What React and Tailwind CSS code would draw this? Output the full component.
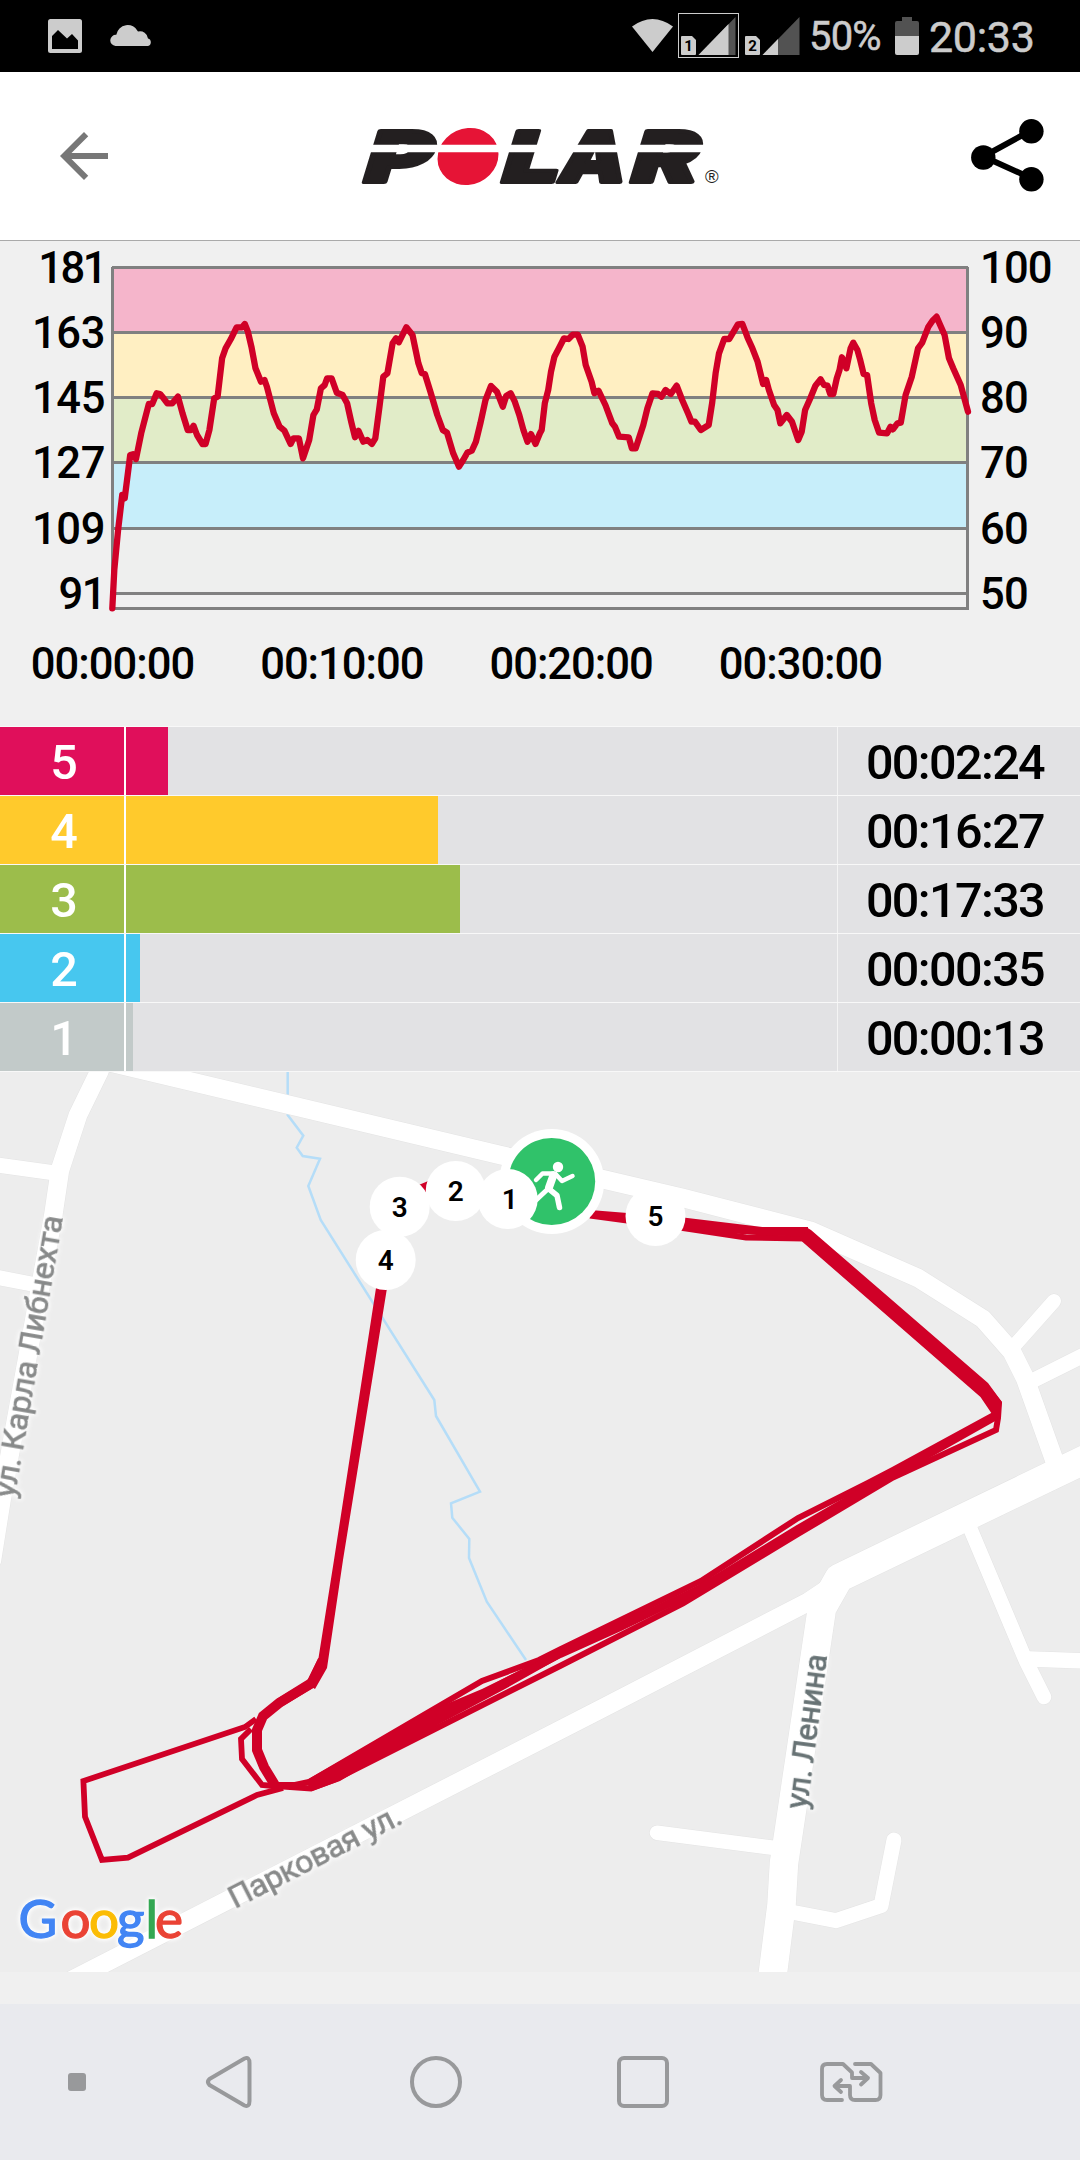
import React from 'react';

const TRACK_RED = '#d00027';

// --- HEART RATE SAMPLES (first half / second half of the session) ---
const firstHalf = [
  [326, 1105], [332, 990], [343, 870], [355, 765], [362, 775], [378, 645], [386, 643], [395, 657], [410, 580], [432, 492],
  [442, 492], [455, 460], [465, 462], [475, 475], [486, 490], [500, 490], [517, 470], [530, 520], [545, 570], [555, 570],
  [562, 557], [572, 585], [588, 612], [597, 612], [608, 570], [622, 475], [632, 470], [645, 355], [655, 325], [670, 298],
  [687, 262], [703, 262], [711, 252], [720, 275], [730, 320], [742, 385], [758, 425], [768, 420], [775, 440], [795, 520],
  [812, 560], [826, 572], [844, 612], [852, 595], [868, 595], [880, 655], [898, 600], [910, 525], [920, 508], [932, 445],
  [943, 435], [950, 415], [963, 415], [978, 458], [995, 465], [1008, 490], [1020, 545], [1031, 592], [1041, 572], [1055, 605],
  [1067, 600], [1080, 612], [1090, 595], [1102, 500], [1113, 410], [1125, 400], [1140, 310], [1150, 295], [1158, 307], [1180, 262],
  [1198, 285], [1215, 370], [1225, 400], [1234, 402], [1250, 455], [1270, 525], [1286, 570], [1298, 578], [1316, 640], [1333, 680],
  [1345, 660], [1357, 638], [1370, 632], [1382, 605], [1395, 550], [1410, 480], [1426, 438], [1443, 455], [1460, 500], [1470, 468],
  [1483, 460], [1495, 485], [1508, 525], [1520, 570], [1532, 605], [1542, 582], [1555, 612], [1568, 580],
];

const secondHalf = [
  [5, 570], [14, 490], [24, 450], [32, 395], [42, 350], [55, 325], [70, 295], [83, 297], [95, 284], [110, 284],
  [124, 320], [133, 375], [150, 425], [158, 460], [170, 452], [190, 495], [210, 550], [218, 560], [230, 590], [258, 592],
  [267, 625], [278, 625], [300, 555], [312, 505], [327, 460], [343, 462], [353, 470], [365, 450], [380, 462], [397, 437],
  [413, 480], [430, 520], [440, 545], [450, 545], [467, 570], [490, 555], [500, 490], [510, 400], [520, 340], [535, 297],
  [550, 297], [575, 253], [588, 252], [603, 293], [617, 325], [632, 365], [648, 432], [657, 420], [665, 450], [680, 495],
  [690, 510], [698, 550], [717, 525], [732, 545], [750, 600], [760, 575], [770, 510], [785, 475], [800, 437], [815, 418],
  [825, 435], [835, 437], [843, 462], [852, 462], [862, 415], [870, 390], [877, 352], [890, 385], [902, 325], [910, 308],
  [922, 330], [930, 360], [940, 402], [950, 405], [962, 490], [972, 540], [985, 578], [1008, 580], [1018, 560], [1025, 568],
  [1038, 550], [1048, 548], [1062, 465], [1080, 410], [1098, 325], [1110, 308], [1128, 260], [1140, 242], [1152, 230], [1160, 250],
  [1175, 285], [1188, 355], [1200, 385], [1222, 435], [1243, 515],
];

const heartRate = [...firstHalf, ...secondHalf.map(([x, y]) => [x + 1568, y])]
  .map(([x, y]) => `${(x / 2.904).toFixed(1)},${(y / 3).toFixed(1)}`)
  .join(' ');

const bands = [
  { y: 27.5, h: 65, color: '#f5b5cb', bpm: 181, pct: 100, tracking: -2.5 },
  { y: 92.5, h: 65, color: '#ffefc2', bpm: 163, pct: 90, tracking: -0.4 },
  { y: 157.5, h: 65, color: '#e1ecc8', bpm: 145, pct: 80, tracking: -0.4 },
  { y: 222.5, h: 66, color: '#c7eefa', bpm: 127, pct: 70, tracking: -0.4 },
  { y: 288.5, h: 65, color: '#eeefee', bpm: 109, pct: 60, tracking: -0.4 },
  { y: 353.5, h: 15, color: '#f0f0f0', bpm: 91, pct: 50, tracking: -1.5 },
];

const zones = [
  { zone: 5, time: '00:02:24', label: 'bg-[#e00f5b]', bar: 'w-[42px] bg-[#e00f5b]' },
  { zone: 4, time: '00:16:27', label: 'bg-[#ffca2c]', bar: 'w-[312px] bg-[#ffca2c]' },
  { zone: 3, time: '00:17:33', label: 'bg-[#9cbd4b]', bar: 'w-[334px] bg-[#9cbd4b]' },
  { zone: 2, time: '00:00:35', label: 'bg-[#47c7ef]', bar: 'w-[14px] bg-[#47c7ef]' },
  { zone: 1, time: '00:00:13', label: 'bg-[#c2cac9]', bar: 'w-[7px] bg-[#c2cac9]' },
];

const roads = [
  { d: 'M100 1060L286.7 1104.3L500 1155L683 1198L811 1231L918 1278L983 1319L1012 1352L1025 1378L1056 1465', w: 18.5 },
  { d: 'M1014 1346L1054 1301', w: 14 },
  { d: 'M1030 1382L1090 1352', w: 15 },
  { d: 'M102 1064L99 1072L78 1115L60 1170L53 1217L2 1497L-8 1560', w: 18.5 },
  { d: 'M-10 1164L55 1173', w: 15 },
  { d: 'M-10 1276L42 1286', w: 15 },
  { d: 'M70 1981L600 1709.5L808 1602L832 1586', w: 18.5 },
  { d: 'M1090 1457L839 1578L822 1608L789 1830L784 1863L781.5 1905L772 1980', w: 28.5 },
  { d: 'M970 1528L1026 1661L1044 1697', w: 14.5 },
  { d: 'M1030 1659L1090 1661', w: 15.5 },
  { d: 'M657 1832.7L775 1848', w: 14.5 },
  { d: 'M786 1911L836 1920.7L881 1905.7L894 1840', w: 15 },
];

const route = [
  { d: 'M590 1213L683 1220.500L762 1230L808 1230', w: 6 },
  { d: 'M590 1215.500L683 1228L746 1237.5L804 1238.5', w: 6 },
  { d: 'M590 1214.5L683 1224L730 1230L770 1232.5L806 1233', w: 6.5 },
  { d: 'M985 1386L999 1403L998 1418L996 1430L893 1477.5L798 1534L683 1603.5L560 1666L336 1779L311 1788.5L283 1786.5', w: 6 },
  { d: 'M994 1415L893 1470L868 1483L798 1518L701 1581L560 1649.5L539 1660L482 1681L309 1782L295 1785L270 1785', w: 6 },
  { d: 'M996 1416L893 1474L798 1529L701 1588L620 1627L560 1654L500 1685L383 1747.5L325 1781', w: 8 },
  { d: 'M322.5 1660L311 1684L279 1703', w: 9.5 },
  { d: 'M313 1682L279 1703L263 1716L257 1730L257 1750L264 1767L275.5 1786', w: 10 },
  { d: 'M421 1189L445 1179', w: 9 },
  { d: 'M283 1788L257 1795L128 1857.7L102 1860L85 1816.7L83.4 1781L245 1727L256 1719', w: 5.8 },
  { d: 'M251 1729L241 1739L242 1759L262 1785L283 1787', w: 5.8 },
];

// overlapping laps that merge into one solid area
const merged = [
  'M806 1227L811 1230L988 1383L1001.500 1401.500L1000 1420L992 1414L980.500 1397L802 1241.500z',
  'M376 1288L387 1288L343 1560L327 1668L315 1689L306 1683L318.500 1658L334 1560z',
  'M305 1781L425 1713L482 1689L560 1651L560 1658L505 1689L404 1743L340 1781L312 1791z',
];

const markers = [
  { n: 3, x: 399.7, y: 1206.7 },
  { n: 2, x: 455.7, y: 1191 },
  { n: 1, x: 507.7, y: 1199 },
  { n: 4, x: 385.7, y: 1260 },
  { n: 5, x: 655.5, y: 1216 },
];

const SimSignal = ({ slot, strong }) => (
  <svg width="55" height="38" viewBox="0 0 55 38">
    <path d="M1 19h10l4 4v14a1 1 0 0 1-1 1H1a1 1 0 0 1-1-1V20a1 1 0 0 1 1-1z" fill="#ccc" />
    <text x="7.5" y="34" textAnchor="middle" fontSize="15" fontWeight="700" fill="#000">{slot}</text>
    <path d="M54.500 0V38H17.500z" fill="#525252" />
    <path d={strong ? 'M47.500 7V38H17.500z' : 'M33 22V38H17.500z'} fill="#ccc" />
  </svg>
);

const StatusBar = () => (
  <div className="h-[72px] bg-black flex items-start text-[#ccc]">
    <svg className="ml-12 mt-[19px]" width="34" height="34" viewBox="0 0 34 34">
      <rect width="34" height="34" rx="2.500" fill="#ccc" />
      <path d="M4 30V17L10 11L19 19.500L24 15L30 21.500V30z" fill="#000" />
    </svg>
    <svg className="ml-7 mt-[23px]" width="42" height="23" viewBox="0 0 42 23">
      <path d="M5.500 23a5.500 5.500 0 0 1 .8-11.200A11.500 11.500 0 0 1 28 8.500A8 8 0 0 1 38 15.500A3.900 3.900 0 0 1 38 23z" fill="#ccc" />
    </svg>
    <svg className="ml-[480px] mt-[19px]" width="41" height="33" viewBox="0 0 41 33">
      <path d="M0 7.500Q20.500-7.500 41 7.500L20.500 33z" fill="#ccc" />
    </svg>
    <div className="ml-[5px] mt-[13px] w-[61px] h-[45px] border border-[#ccc] pl-0.5 pt-[3px]">
      <SimSignal slot="1" strong />
    </div>
    <div className="ml-[6px] mt-[17px]"><SimSignal slot="2" /></div>
    <span className="ml-[9px] mt-[17px] w-[75px] text-[40px] leading-[40px] tracking-[-0.8px] [-webkit-text-stroke:0.5px_#ccc]">50%</span>
    <svg className="ml-[11px] mt-[17px]" width="24" height="38" viewBox="0 0 24 38">
      <path d="M7 0h10v4h5a2 2 0 0 1 2 2v14H0V6a2 2 0 0 1 2-2h5z" fill="#525252" />
      <path d="M0 19h24v17a2 2 0 0 1-2 2H2a2 2 0 0 1-2-2z" fill="#ccc" />
    </svg>
    <span className="ml-[10px] mt-[16px] text-[43px] leading-[42px] tracking-[-0.3px] [-webkit-text-stroke:0.5px_#ccc]">20:33</span>
  </div>
);

const PolarLogo = () => (
  <svg width="380" height="120" viewBox="-10 -28 380 120">
    <g fill="#231f20" stroke="#231f20" strokeWidth="4" strokeLinejoin="round" fontFamily="Inter" fontWeight="900" fontSize="70">
      <text transform="translate(0 57.500) skewX(-17)" textLength="66" lengthAdjust="spacingAndGlyphs">P</text>
      <text transform="translate(138 57.500) skewX(-17)" textLength="57" lengthAdjust="spacingAndGlyphs">L</text>
      <text transform="translate(196 57.500) skewX(-12)" textLength="66" lengthAdjust="spacingAndGlyphs">A</text>
      <text transform="translate(267 57.500) skewX(-17)" textLength="66" lengthAdjust="spacingAndGlyphs">R</text>
    </g>
    <ellipse cx="108" cy="32.500" rx="31" ry="28" transform="rotate(-25 108 32.500)" fill="#e61436" />
    <path d="M0 24.500H344" stroke="#fff" strokeWidth="7.400" />
    <text x="345" y="58.500" fontSize="18.500" fontFamily="Liberation Sans" fill="#231f20">®</text>
  </svg>
);

const Header = () => (
  <div className="h-[169px] bg-white border-b border-[#aaa] flex items-center">
    <svg className="ml-12" width="72" height="72" viewBox="0 0 24 24" fill="#777">
      <path d="M20 11H7.830l5.590-5.590L12 4l-8 8 8 8 1.410-1.410L7.830 13H20v-2z" />
    </svg>
    <div className="ml-[230px]"><PolarLogo /></div>
    <svg className="ml-[240px]" width="76" height="76" viewBox="0 0 76 76">
      <path d="M61.400 13.300L13.300 39.500L61.400 61.300" transform="translate(0 -1)" fill="none" stroke="#000" strokeWidth="6" />
      <circle cx="61.400" cy="13.300" r="12.200" />
      <circle cx="13.300" cy="39.500" r="12.200" />
      <circle cx="61.400" cy="61.300" r="12.200" />
    </svg>
  </div>
);

const HeartRateChart = () => (
  <svg className="block" width="1080" height="485" viewBox="0 1 1080 485" fontSize="43.500" fontWeight="500">
    {bands.map((b) => (
      <g key={b.bpm}>
        <rect x="112.500" y={b.y} width="855" height={b.h} fill={b.color} />
        <text x="105" y={b.y + 15.5} textAnchor="end" letterSpacing={b.tracking}>{b.bpm}</text>
        <text x="980" y={b.y + 15.5} letterSpacing="-0.8">{b.pct}</text>
      </g>
    ))}
    {bands.map((b) => (
      <path key={b.bpm} d={`M112 ${b.y}H968`} stroke="#808080" strokeWidth="3" />
    ))}
    <path d="M112.500 27V368.500H967.500V27" fill="none" stroke="#808080" strokeWidth="3" />
    <polyline points={heartRate} fill="none" stroke={TRACK_RED} strokeWidth="6.300" strokeLinejoin="round" strokeLinecap="round" />
    {['00:00:00', '00:10:00', '00:20:00', '00:30:00'].map((t, i) => (
      <text key={t} x={112.5 + i * 229.3} y="439" textAnchor="middle" letterSpacing="-1">{t}</text>
    ))}
  </svg>
);

const ZoneTable = () => (
  <div className="border-t border-[#f8f8f8]">
    {zones.map((z) => (
      <div key={z.zone} className="h-[69px] flex border-b border-[#f8f8f8] bg-[#e2e2e4] text-[48.5px] leading-[72px] font-medium">
        <div className={`w-[124px] pl-1 text-center text-white ${z.label}`}>{z.zone}</div>
        <div className="w-[713px] border-l-2 border-white">
          <div className={`h-full ${z.bar}`} />
        </div>
        <div className="flex-1 border-l border-[#f4f4f4] pr-2 text-center tracking-[-1.6px]">{z.time}</div>
      </div>
    ))}
  </div>
);

const StreetName = ({ x, y, angle, length, color, children }) => (
  <text
    className="[filter:drop-shadow(0_0_2px_#fff)_drop-shadow(0_0_2px_#fff)]"
    transform={`translate(${x} ${y}) rotate(${angle})`}
    textLength={length}
    fontSize="32"
    fill={color}
    stroke={color}
    strokeWidth="0.700"
  >
    {children}
  </text>
);

const RouteMap = () => (
  <svg className="block" width="1080" height="900" viewBox="0 1072 1080 900">
    <rect y="1072" width="1080" height="900" fill="#ededed" />
    <path
      d="M287.700 1072V1115L303.300 1135.700L296.700 1147.700L302.700 1156L320 1158.700L308.300 1186L320.700 1220L434.300 1400L436 1416L480 1491.700L451 1503.300L452.300 1517.700L469.300 1539L469 1558L486.800 1601.700L526 1660"
      fill="none" stroke="#b5ddf8" strokeWidth="2.500"
    />
    <g fill="none" strokeLinejoin="round" strokeLinecap="round">
      {roads.map((r) => <path key={r.d} d={r.d} stroke="#e4e4e4" strokeWidth={r.w + 1} />)}
      {roads.map((r) => <path key={r.d} d={r.d} stroke="#fff" strokeWidth={r.w} />)}
    </g>
    <StreetName x={14.5} y={1499} angle={-80.2} length={286} color="#888a8a">ул. Карла Либнехта</StreetName>
    <StreetName x={807} y={1810} angle={-82.5} length={156} color="#687375">ул. Ленина</StreetName>
    <StreetName x={235} y={1909} angle={-27} length={190} color="#888a8a">Парковая ул.</StreetName>
    <g fill="none" stroke={TRACK_RED}>
      {route.map((r) => <path key={r.d} d={r.d} strokeWidth={r.w} />)}
    </g>
    {merged.map((d) => <path key={d} d={d} fill={TRACK_RED} />)}

    {/* start point */}
    <circle cx="551.700" cy="1181.500" r="52.500" fill="#fff" />
    <circle cx="551.700" cy="1181.500" r="43.500" fill="#30c26a" />
    <g fill="none" stroke="#fff" strokeLinejoin="round" strokeLinecap="round">
      <circle cx="558" cy="1167" r="5.200" fill="#fff" stroke="none" />
      <path d="M536 1180L542.500 1173.500H552" strokeWidth="4.500" />
      <path d="M553.500 1175L549 1187.500" strokeWidth="8" />
      <path d="M556 1174.500L562 1181L572.500 1176" strokeWidth="4.500" />
      <path d="M549 1188L542.500 1194L534 1202" strokeWidth="5" />
      <path d="M549 1189L557 1195.500L559.500 1207.500" strokeWidth="5.500" />
    </g>

    {markers.map((m) => (
      <g key={m.n}>
        <circle cx={m.x} cy={m.y} r="30" fill="#fff" />
        <text x={m.n === 1 ? m.x + 2 : m.x} y={m.y + 10.2} textAnchor="middle" fontSize="28" fontWeight="600">{m.n}</text>
      </g>
    ))}

    <text
      className="[filter:drop-shadow(0_0_2px_#fff)_drop-shadow(0_0_2px_#fff)]"
      x="18.500 60.500 89 117 145.500 155" y="1937.500" fontFamily="Lato" fontSize="53" strokeWidth="1.300"
    >
      <tspan fill="#4285f4" stroke="#4285f4">G</tspan>
      <tspan fill="#ea4335" stroke="#ea4335">o</tspan>
      <tspan fill="#fbbc05" stroke="#fbbc05">o</tspan>
      <tspan fill="#4285f4" stroke="#4285f4">g</tspan>
      <tspan fill="#34a853" stroke="#34a853">l</tspan>
      <tspan fill="#ea4335" stroke="#ea4335">e</tspan>
    </text>
  </svg>
);

const NavBar = () => (
  <div className="mt-8 h-[156px] bg-[#e9eaee] flex items-center">
    <div className="ml-[68px] w-[18px] h-[18px] rounded-[3px] bg-[#98999b]" />
    <svg className="ml-[118px]" width="50" height="54" viewBox="0 0 50 54" fill="none" stroke="#98999b" strokeWidth="4">
      <path d="M40.500 3.500L5.500 24Q2.500 27 5.500 30L40.500 50.500Q45.500 52.500 45.500 46V8Q45.500 1.500 40.500 3.500z" strokeLinejoin="round" />
    </svg>
    <div className="ml-[156px] w-[52px] h-[52px] rounded-full border-4 border-[#98999b]" />
    <div className="ml-[155px] w-[52px] h-[52px] rounded-[7px] border-4 border-[#98999b]" />
    <svg className="ml-[150px]" width="64" height="42" viewBox="19 21 64 42" fill="none" stroke="#98999b" strokeWidth="3.800" strokeLinecap="round" strokeLinejoin="round">
      <path d="M42 60H27Q22 60 22 55V29Q22 24 27 24H43L52 32.500V38H68M61 32L68 38L61 44.500" />
      <path d="M55 24H71L80.500 33V55Q80.500 60 75.500 60H55Q50 60 50 55V46H34.500M41 40L34.500 46L41 52" />
    </svg>
  </div>
);

const App = () => {
  return (
    <div className="w-[1080px] h-[2160px] overflow-hidden bg-[#f0f0f0] text-black font-['Roboto',sans-serif]">
      <StatusBar />
      <Header />
      <HeartRateChart />
      <ZoneTable />
      <RouteMap />
      <NavBar />
    </div>
  );
};

export default App;
